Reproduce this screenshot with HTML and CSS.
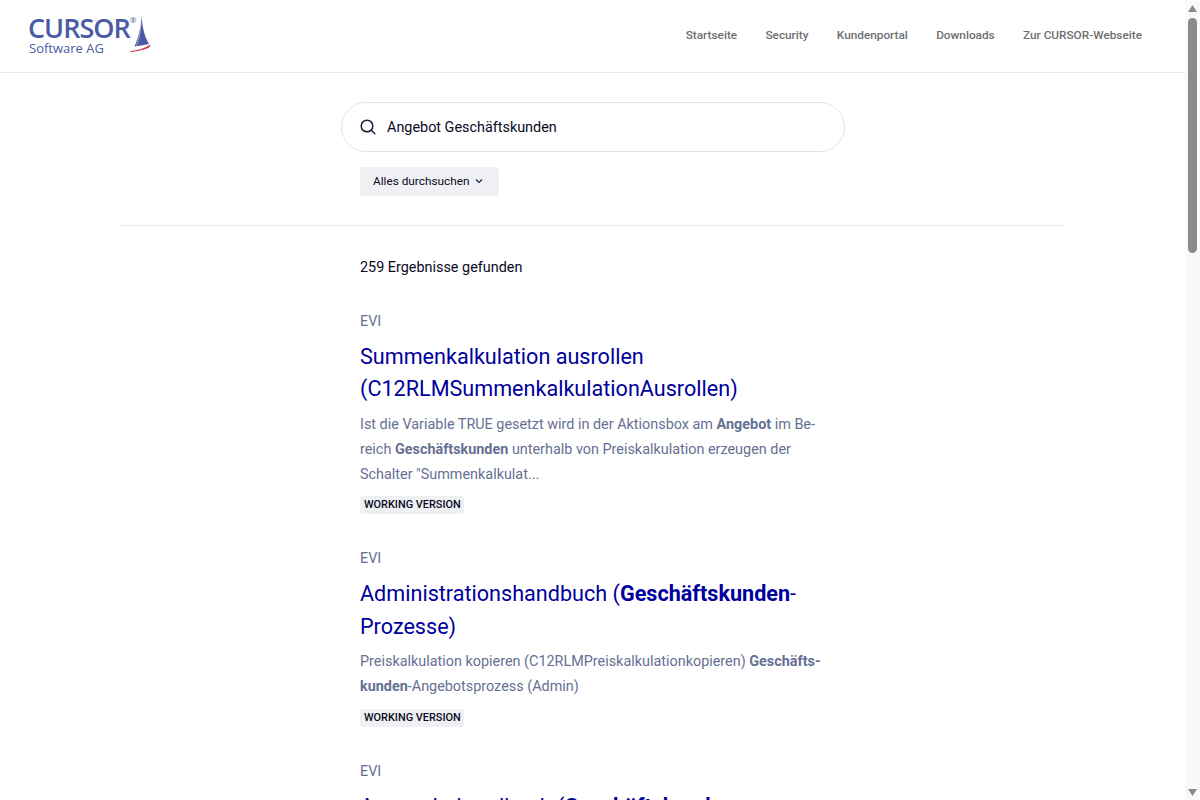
FILE: index.html
```html
<!DOCTYPE html>
<html lang="de">
<head>
<meta charset="utf-8">
<title>Suche</title>
<link rel="stylesheet" href="styles.css">
</head>
<body>
<div class="viewport">
<header class="topbar">
  <a class="logo" href="#">
    <span class="logo-text">
      <span class="logo-name">CURSOR</span>
      <span class="logo-sub">Software AG</span>
    </span>
    <span class="logo-reg">®</span>
    <svg class="logo-boat" width="22" height="38" viewBox="0 0 22 38">
      <path d="M12.7 0.5 C13 10 15 21 20 29 C15 30 10 31 5.5 31.5 C9.5 23 12 12 12.7 0.5Z" fill="#4a5aa3"/>
      <path d="M12 8 C11.5 16 10 25 7.5 30.5" fill="none" stroke="#fff" stroke-width="0.7" opacity=".7"/>
      <path d="M1.5 36 C9 35.5 16 33 21.5 29.5 C21.5 31.5 20 32.5 18 33.5 C13 35.5 7 36.5 1.5 37Z" fill="#c4314b"/>
    </svg>
  </a>
  <nav class="nav">
    <a href="#">Startseite</a>
    <a href="#">Security</a>
    <a href="#">Kundenportal</a>
    <a href="#">Downloads</a>
    <a href="#">Zur CURSOR-Webseite</a>
  </nav>
</header>
<main class="page">
  <section class="search-area">
    <div class="searchbox">
      <svg width="16" height="16" viewBox="0 0 16 16" fill="none" stroke="#1a1f36" stroke-width="1.5" stroke-linecap="round"><circle cx="7" cy="7" r="5.8"/><path d="M11.3 11.3 14.8 14.8"/></svg>
      <span>Angebot Geschäftskunden</span>
    </div>
    <button class="filter">Alles durchsuchen
      <svg width="8" height="6" viewBox="0 0 8 6" fill="none" stroke="#1a1f36" stroke-width="1.1"><path d="M1 1.5 4 4.5 7 1.5"/></svg>
    </button>
  </section>
  <section class="results">
    <p class="count">259 Ergebnisse gefunden</p>
    <article class="result">
      <div class="space">EVI</div>
      <h2><a href="#">Summenkalkulation ausrollen (C12RLMSummenkalkulationAusrollen)</a></h2>
      <p class="snippet">Ist die Variable TRUE gesetzt wird in der Aktionsbox am <b>Angebot</b> im Be&shy;reich <b>Geschäftskunden</b> unterhalb von Preiskalkulation erzeugen der Schalter "Summenkalkulat...</p>
      <span class="badge">WORKING VERSION</span>
    </article>
    <article class="result">
      <div class="space">EVI</div>
      <h2><a href="#">Administrationshandbuch (<b>Geschäftskunden</b>-Prozesse)</a></h2>
      <p class="snippet">Preiskalkulation kopieren (C12RLMPreiskalkulationkopieren) <b>Geschäfts&shy;kunden</b>-Angebotsprozess (Admin)</p>
      <span class="badge">WORKING VERSION</span>
    </article>
    <article class="result">
      <div class="space">EVI</div>
      <h2><a href="#">Anwenderhandbuch (<b>Geschäftskunden</b>-Prozesse)</a></h2>
      <p class="snippet">Preiskalkulation kopieren (C12RLMPreiskalkulationkopieren) <b>Geschäfts&shy;kunden</b>-Angebotsprozess (Anwender)</p>
      <span class="badge">WORKING VERSION</span>
    </article>
  </section>
</main>
</div>
<div class="scrollbar" aria-hidden="true">
  <svg width="9" height="7" viewBox="0 0 9 7"><path d="M4.5 0 9 7H0Z" fill="#8a8a8a"/></svg>
  <div class="scroll-track"><div class="scroll-thumb"></div></div>
  <svg width="9" height="7" viewBox="0 0 9 7"><path d="M0 0H9L4.5 7Z" fill="#8a8a8a"/></svg>
</div>
</body>
</html>
```
FILE: styles.css
```css
* { box-sizing: border-box; }
html, body { height: 100%; overflow: hidden; }
body { margin: 0; background: #fff; color: #0a0a23; font-family: Roboto, "Liberation Sans", sans-serif; }
a { color: inherit; text-decoration: none; }
.viewport { width: 1185px; height: 800px; overflow: hidden; }
.scrollbar { position: fixed; top: 0; right: 0; bottom: 0; width: 15px; background: #f9f9f9; display: flex; flex-direction: column; align-items: center; padding: 5px 0 4px; }
.scroll-track { flex: 1; width: 9px; padding-top: 6px; }
.scroll-thumb { height: 235px; background: #8a8a8a; border-radius: 5px; }
.topbar { height: 73px; border-bottom: 1px solid #e8e9ec; display: flex; align-items: center; justify-content: space-between; padding: 0 43px 0 28px; }
.logo { display: flex; align-items: flex-start; color: #4a5aa3; margin-top: -2px; }
.logo-text { display: flex; flex-direction: column; }
.logo-name { font: 600 27px/27px "Open Sans", sans-serif; letter-spacing: -1px; }
.logo-reg { font: 400 8px/8px "Open Sans", sans-serif; margin: 2px 0 0 0; }
.logo-sub { font: 400 13px/15px "Open Sans", sans-serif; margin-left: 1px; }
.logo-boat { margin: 1px 0 0 -7px; }
.nav { display: flex; gap: 28.3px; font-size: 11.8px; font-weight: 500; color: #6e6e6e; margin-top: -3px; }
.page { width: 945px; margin-left: 120px; }
.search-area { padding: 29px 0 29px 221px; border-bottom: 1px solid #e8e9ec; display: flex; flex-direction: column; align-items: flex-start; }
.searchbox { width: 504px; height: 50px; border: 1px solid #e3e4ea; border-radius: 25px; display: flex; align-items: center; gap: 11px; padding-left: 18px; margin-bottom: 15px; font: 14.4px Roboto, sans-serif; color: #0a0a23; }
.filter { width: 139px; height: 29px; margin-left: 19px; border: 0; border-radius: 3px; background: #eff0f4; font: 11.8px Roboto, sans-serif; color: #0a0a23; display: flex; align-items: center; justify-content: flex-start; gap: 6px; padding: 0 0 1px 13px; }
.results { width: 465px; margin-left: 240px; padding-top: 32px; }
.count { margin: 0 0 34px; font-size: 14.4px; line-height: 20px; }
.result { margin-bottom: 35px; }
.space { font-size: 14.4px; line-height: 20px; color: #667093; margin-bottom: 9px; }
.result h2 { margin: 0 0 6px; font-size: 21.6px; line-height: 32.4px; font-weight: 400; color: #00009c; }
.snippet { margin: 0 0 9.6px; font-size: 14.4px; line-height: 25px; color: #667093; hyphens: manual; }
.badge { display: block; width: max-content; background: #eff0f4; border-radius: 3px; padding: 0 3px 1px 4px; font-size: 10.9px; line-height: 17px; font-weight: 500; color: #0a0a23; }
```
